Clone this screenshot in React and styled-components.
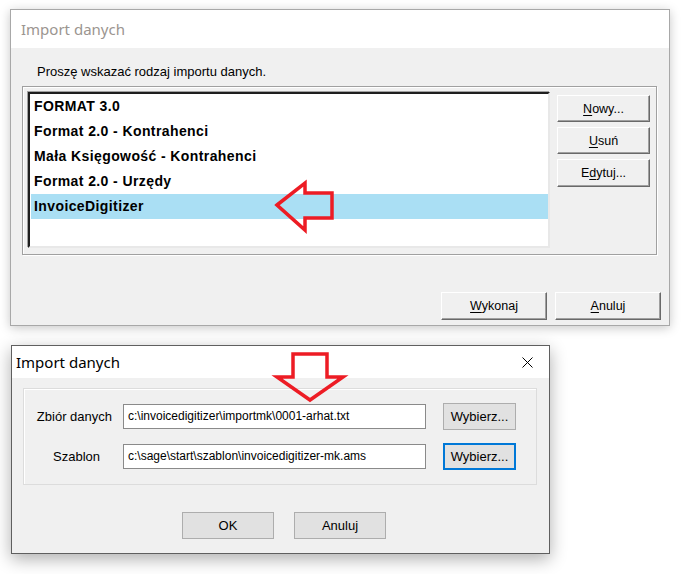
import React from "react";
import styled, { createGlobalStyle } from "styled-components";

const Global = createGlobalStyle`
  html, body {
    margin: 0;
    padding: 0;
    background: #ffffff;
  }
  body {
    font-family: "Liberation Sans", Arial, sans-serif;
    width: 685px;
    height: 574px;
    overflow: hidden;
  }
`;

const Page = styled.div`
  position: relative;
  width: 685px;
  height: 574px;
  padding: 9px 0 0 10px;
  box-sizing: border-box;
  display: flex;
  flex-direction: column;
  align-items: flex-start;
`;

/* ---------- first dialog (classic, inactive) ---------- */

const Window = styled.div`
  width: ${(p) => p.$w}px;
  height: ${(p) => p.$h}px;
  box-sizing: border-box;
  border: 1px solid ${(p) => (p.$active ? "#5f5f5f" : "#a8a8a8")};
  box-shadow: ${(p) =>
    p.$active ? "0 5px 16px rgba(0,0,0,0.32)" : "0 2px 10px rgba(0,0,0,0.22)"};
  margin: ${(p) => p.$margin || "0"};
  display: flex;
  flex-direction: column;
  background: #f0f0f0;
`;

const TitleBar = styled.div`
  height: ${(p) => p.$h}px;
  flex: none;
  background: #ffffff;
  display: flex;
  align-items: center;
  justify-content: space-between;
  padding: 0 16px 0 ${(p) => p.$pl}px;
  font-family: "Noto Sans", "Open Sans", sans-serif;
  font-size: 15px;
  color: ${(p) => (p.$active ? "#000000" : "#9b9590")};
`;

const Body1 = styled.div`
  flex: 1;
  display: flex;
  flex-direction: column;
  padding: 0 8px 0 11px;
`;

const Prompt = styled.div`
  margin: 16px 0 0 15px;
  height: 16px;
  line-height: 16px;
  font-size: 13px;
  color: #000;
`;

const EtchedFrame = styled.div`
  margin-top: 6px;
  width: 635px;
  height: 169px;
  box-sizing: border-box;
  border: 1px solid #a0a0a0;
  box-shadow: inset 1px 1px 0 #ffffff, 1px 1px 0 #ffffff;
  padding: 5px;
  display: flex;
  gap: 7px;
`;

const ListBox = styled.div`
  width: 522px;
  height: 156px;
  box-sizing: border-box;
  background: #ffffff;
  border: 2px solid;
  border-color: #1e1e1e #e8e8e8 #e8e8e8 #1e1e1e;
  box-shadow: -1px -1px 0 #a0a0a0;
  display: flex;
  flex-direction: column;
`;

const ListItem = styled.div`
  height: 25px;
  line-height: 25px;
  padding-left: 3px;
  margin-left: 1px;
  font-weight: bold;
  font-size: 14px;
  letter-spacing: 0.4px;
  color: #000;
  background: ${(p) => (p.$selected ? "#aadff4" : "transparent")};
`;

const SideButtons = styled.div`
  margin-top: 3px;
  display: flex;
  flex-direction: column;
  gap: 5px;
`;

const ClassicButton = styled.button`
  width: ${(p) => p.$w}px;
  height: ${(p) => p.$h}px;
  box-sizing: border-box;
  padding: 0;
  background: #f0f0f0;
  border: 1px solid;
  border-color: #ffffff #696969 #696969 #ffffff;
  box-shadow: inset -1px -1px 0 #a0a0a0;
  font-family: "Liberation Sans", Arial, sans-serif;
  font-size: 12.5px;
  color: #000;
  cursor: default;
`;

const Mn = styled.span`
  text-decoration: underline;
  text-underline-offset: 2px;
`;

const Footer1 = styled.div`
  margin-top: 37px;
  display: flex;
  justify-content: flex-end;
  gap: 8px;
`;

/* ---------- second dialog (Win10, active) ---------- */

const Body2 = styled.div`
  flex: 1;
  display: flex;
  flex-direction: column;
  padding: 10px 12px 0 11px;
`;

const LightFrame = styled.div`
  width: 514px;
  height: 97px;
  box-sizing: border-box;
  border: 1px solid #dcdcdc;
  box-shadow: inset 1px 1px 0 #ffffff;
  padding-top: 14px;
  display: flex;
  flex-direction: column;
  gap: 13px;
`;

const FieldRow = styled.div`
  display: flex;
  align-items: center;
  height: 27px;
`;

const FieldLabel = styled.div`
  width: 88px;
  box-sizing: border-box;
  padding-right: ${(p) => p.$pr || 0}px;
  text-align: right;
  font-size: 13px;
  color: #000;
  margin-right: 11px;
`;

const TextInput = styled.div`
  width: 303px;
  height: 25px;
  box-sizing: border-box;
  border: 1px solid #8a8a8a;
  background: #ffffff;
  padding-left: 4px;
  line-height: 23px;
  font-size: 12px;
  color: #000;
  white-space: nowrap;
  overflow: hidden;
  margin-right: 17px;
`;

const ModernButton = styled.button`
  width: ${(p) => p.$w}px;
  height: ${(p) => p.$h}px;
  box-sizing: border-box;
  padding: 0;
  background: #e1e1e1;
  border: 1px solid ${(p) => (p.$focused ? "#0078d7" : "#adadad")};
  box-shadow: ${(p) => (p.$focused ? "inset 0 0 0 1px #0078d7" : "none")};
  font-family: "Liberation Sans", Arial, sans-serif;
  font-size: 13px;
  color: #000;
  cursor: default;
`;

const Footer2 = styled.div`
  margin-top: 27px;
  padding-left: 159px;
  display: flex;
  gap: 20px;
`;

const Arrow = styled.svg`
  position: absolute;
  left: ${(p) => p.$x}px;
  top: ${(p) => p.$y}px;
  pointer-events: none;
  overflow: visible;
`;

const items = [
  "FORMAT 3.0",
  "Format 2.0 - Kontrahenci",
  "Mała Księgowość - Kontrahenci",
  "Format 2.0 - Urzędy",
  "InvoiceDigitizer",
];

export default function App() {
  return (
    <>
      <Global />
      <Page>
        <Window $w={660} $h={317}>
          <TitleBar $h={38} $pl={10}>Import danych</TitleBar>
          <Body1>
            <Prompt>Proszę wskazać rodzaj importu danych.</Prompt>
            <EtchedFrame>
              <ListBox>
                {items.map((t, i) => (
                  <ListItem key={t} $selected={i === 4}>
                    {t}
                  </ListItem>
                ))}
              </ListBox>
              <SideButtons>
                <ClassicButton $w={93} $h={27}>
                  <Mn>N</Mn>owy...
                </ClassicButton>
                <ClassicButton $w={93} $h={27}>
                  <Mn>U</Mn>suń
                </ClassicButton>
                <ClassicButton $w={93} $h={28}>
                  E<Mn>d</Mn>ytuj...
                </ClassicButton>
              </SideButtons>
            </EtchedFrame>
            <Footer1>
              <ClassicButton $w={106} $h={28}>
                <Mn>W</Mn>ykonaj
              </ClassicButton>
              <ClassicButton $w={106} $h={28}>
                <Mn>A</Mn>nuluj
              </ClassicButton>
            </Footer1>
          </Body1>
        </Window>

        <Window $w={539} $h={209} $active $margin="19px 0 0 1px">
          <TitleBar $h={32} $pl={4} $active>
            <span>Import danych</span>
            <svg width="11" height="11" viewBox="0 0 11 11">
              <path d="M0.5 0.5 L10.5 10.5 M10.5 0.5 L0.5 10.5" stroke="#000" strokeWidth="1" />
            </svg>
          </TitleBar>
          <Body2>
            <LightFrame>
              <FieldRow>
                <FieldLabel>Zbiór danych</FieldLabel>
                <TextInput>c:\invoicedigitizer\importmk\0001-arhat.txt</TextInput>
                <ModernButton $w={73} $h={27}>Wybierz...</ModernButton>
              </FieldRow>
              <FieldRow>
                <FieldLabel $pr={12}>Szablon</FieldLabel>
                <TextInput>c:\sage\start\szablon\invoicedigitizer-mk.ams</TextInput>
                <ModernButton $w={73} $h={27} $focused>Wybierz...</ModernButton>
              </FieldRow>
            </LightFrame>
            <Footer2>
              <ModernButton $w={92} $h={27}>OK</ModernButton>
              <ModernButton $w={92} $h={27}>Anuluj</ModernButton>
            </Footer2>
          </Body2>
        </Window>

        <Arrow $x={270} $y={176} width="70" height="62" viewBox="0 0 70 62">
          <path
            d="M7 29 L35 7 L35 17 L62 17 L62 42 L35 42 L35 54 Z"
            fill="none"
            stroke="#ed1c24"
            strokeWidth="3.5"
            strokeLinejoin="miter"
          />
        </Arrow>
        <Arrow $x={270} $y={348} width="80" height="58" viewBox="0 0 80 58">
          <path
            d="M23 6 L57 6 L57 29 L73 29 L40 52 L7 29 L23 29 Z"
            fill="none"
            stroke="#ed1c24"
            strokeWidth="3.5"
            strokeLinejoin="miter"
          />
        </Arrow>
      </Page>
    </>
  );
}
